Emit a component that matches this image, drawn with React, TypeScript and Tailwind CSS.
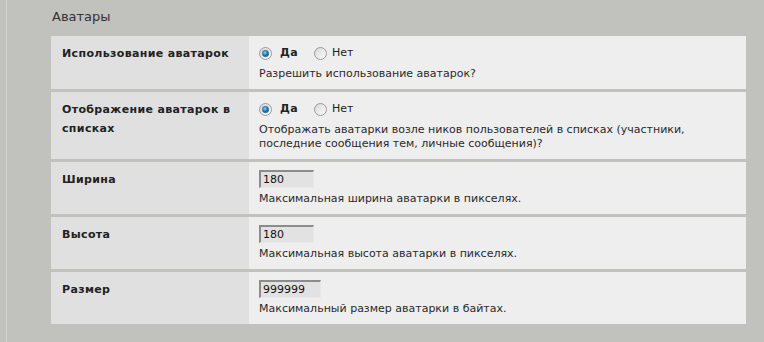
import React from "react";

const font = { fontFamily: '"DejaVu Sans", Verdana, sans-serif' };

function Radio({ checked }: { checked: boolean }) {
  return (
    <svg width="13" height="13" viewBox="0 0 13 13" className="shrink-0">
      <defs>
        <linearGradient id={checked ? "rg1" : "rg0"} x1="0" y1="0" x2="1" y2="1">
          <stop offset="0" stopColor="#d8d8d8" />
          <stop offset="1" stopColor="#fbfbfb" />
        </linearGradient>
        <radialGradient id="dot" cx="0.4" cy="0.35" r="0.7">
          <stop offset="0" stopColor="#7fd0f5" />
          <stop offset="0.6" stopColor="#1a7fbf" />
          <stop offset="1" stopColor="#0d4f7c" />
        </radialGradient>
      </defs>
      <circle cx="6.5" cy="6.5" r="6" fill={`url(#${checked ? "rg1" : "rg0"})`} stroke="#9a9a9a" strokeWidth="1" />
      {checked && <circle cx="6.5" cy="6.5" r="3.2" fill="url(#dot)" stroke="#2c5d80" strokeWidth="0.6" />}
    </svg>
  );
}

function RadioRow() {
  return (
    <div className="flex h-[19px] items-center text-[11px] text-[#222]">
      <Radio checked />
      <span className="ml-[8px] font-bold tracking-[0.4px]">Да</span>
      <span className="ml-[16px]">
        <Radio checked={false} />
      </span>
      <span className="ml-[5px]">Нет</span>
    </div>
  );
}

function Input({ value, w }: { value: string; w: string }) {
  return (
    <div
      className={`${w} h-[18px] border-t-2 border-l-2 border-t-[#8c8c8c] border-l-[#8c8c8c] border-r border-b border-r-[#e8e8e8] border-b-[#e8e8e8] bg-[#e2e2e2] pl-[2px] text-[11px] leading-[16px] text-[#111]`}
    >
      {value}
    </div>
  );
}

function Row({
  label,
  children,
  desc,
}: {
  label: React.ReactNode;
  children: React.ReactNode;
  desc: React.ReactNode;
}) {
  return (
    <div className="flex">
      <div className="w-[198px] shrink-0 bg-[#dfe0df] pl-[11px] pr-[6px] pt-[8px] text-[11px] font-bold leading-[19px] tracking-[0.35px] text-[#222]">
        {label}
      </div>
      <div className="flex-1 bg-[#eeeeee] pl-[10px] pr-[8px] pt-[8px] pb-[8px]">
        {children}
        <div className="mt-[4px] text-[11px] leading-[14px] text-[#2a2a2a]">{desc}</div>
      </div>
    </div>
  );
}

export default function App() {
  return (
    <div className="h-[342px] w-[764px] bg-[#c1c1be] overflow-hidden" style={font}>
      <div className="flex h-full">
        <div className="w-[6px] shrink-0" />
        <div className="w-[1px] shrink-0 bg-[#d2d2d0]" />
        <div className="w-[44px] shrink-0" />
        <div className="w-[695px] shrink-0">
          <div className="pl-[1px] pt-[9px] h-[36px] text-[13px] leading-[16px] text-[#333]">Аватары</div>
          <div className="flex flex-col gap-[3px]">
            <Row label="Использование аватарок" desc="Разрешить использование аватарок?">
              <RadioRow />
            </Row>
            <Row
              label={
                <>
                  Отображение аватарок в
                  <br />
                  списках
                </>
              }
              desc={
                <>
                  Отображать аватарки возле ников пользователей в списках (участники,
                  <br />
                  последние сообщения тем, личные сообщения)?
                </>
              }
            >
              <RadioRow />
            </Row>
            <Row label="Ширина" desc="Максимальная ширина аватарки в пикселях.">
              <Input value="180" w="w-[55px]" />
            </Row>
            <Row label="Высота" desc="Максимальная высота аватарки в пикселях.">
              <Input value="180" w="w-[55px]" />
            </Row>
            <Row label="Размер" desc="Максимальный размер аватарки в байтах.">
              <Input value="999999" w="w-[62px]" />
            </Row>
          </div>
        </div>
      </div>
    </div>
  );
}
